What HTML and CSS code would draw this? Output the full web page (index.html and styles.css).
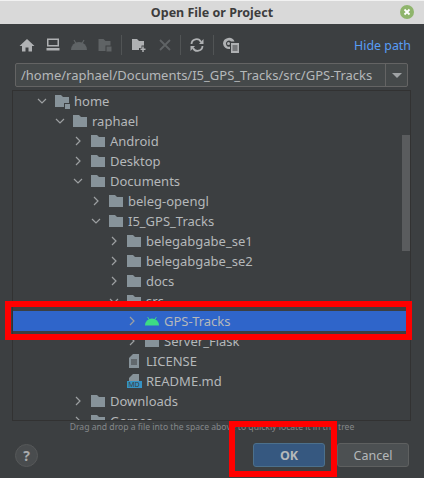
FILE: index.html
```html
<!DOCTYPE html>
<html lang="en">
<head>
<meta charset="utf-8">
<title>Open File or Project</title>
<link rel="stylesheet" href="styles.css">
</head>
<body>
<svg class="defs" width="0" height="0" aria-hidden="true">
  <symbol id="folder" viewBox="0 0 14 12"><path d="M0 0h6l2 2h6v10H0z"/></symbol>
  <symbol id="android" viewBox="0 0 16 10"><path d="M0 10a8 8 0 0 1 16 0z"/><path d="M3 .5l2 3M13 .5l-2 3" stroke-width="1.1" stroke="currentColor"/></symbol>
</svg>
<div class="dialog">
  <header class="titlebar">
    <span class="title">Open File or Project</span>
    <svg class="close" width="14" height="14" viewBox="0 0 14 14"><circle cx="7" cy="7" r="7" fill="#8fb56c"/><path d="M4.500 4.500l5 5M9.500 4.500l-5 5" stroke="#fff" stroke-width="1.800"/></svg>
  </header>
  <div class="toolbar">
    <div class="tools">
      <span class="tool"><svg width="16" height="16" viewBox="0 0 16 16"><path d="M8 2L.5 9H3v5.500h3.500V10.500h3v4H13V9h2.500z" fill="#afb1b3"/></svg></span>
      <span class="tool"><svg width="16" height="16" viewBox="0 0 16 16"><path d="M2 1.500h12v8H2zM3.500 3v5h9V3zM1.500 11h13v2.500h-13z" fill="#afb1b3" fill-rule="evenodd"/></svg></span>
      <span class="tool"><svg width="18" height="16" viewBox="0 0 18 16"><path d="M1 13a8 8 0 0 1 16 0z" fill="#5f6365"/><path d="M4 3l2 3.500M14 3l-2 3.500" stroke="#5f6365" stroke-width="1.200"/></svg></span>
      <span class="tool"><svg width="16" height="16" viewBox="0 0 16 16"><path d="M1.500 2h5l2 2h5v4.500H8.500V14h-7z" fill="#5f6365"/><rect x="9.500" y="9.500" width="5" height="5" fill="#5f6365"/></svg></span>
      <span class="sep sep-a"></span>
      <span class="tool"><svg width="16" height="16" viewBox="0 0 16 16"><path d="M1 2h5l2 2h5v4.500h-2.500V11H8v2H1z" fill="#afb1b3"/><path d="M12 9.500v5.500M9.500 12.250h5" stroke="#afb1b3" stroke-width="1.500"/></svg></span>
      <span class="tool"><svg width="14" height="14" viewBox="0 0 14 14"><path d="M2 2l10 10M12 2L2 12" stroke="#5f6365" stroke-width="1.800"/></svg></span>
      <span class="sep sep-b"></span>
      <span class="tool"><svg width="16" height="16" viewBox="0 0 16 16"><path d="M2.500 7a5 5 0 0 1 9.500-2M13.500 9a5 5 0 0 1-9.500 2" fill="none" stroke="#afb1b3" stroke-width="1.800"/><path d="M14.500 2v5H10zM1.500 14V9H6z" fill="#afb1b3"/></svg></span>
      <span class="sep sep-c"></span>
      <span class="tool"><svg width="18" height="18" viewBox="0 0 18 18"><path d="M1 7.500a6 6 0 0 1 11.500-2H9a3 3 0 1 0-1 5v2.500A6 6 0 0 1 1 7.500z" fill="#afb1b3"/><circle cx="6.500" cy="7.500" r="1.500" fill="#afb1b3"/><path d="M9 7h8v10H9z" fill="#afb1b3"/><path d="M10.500 10h5M10.500 12h5M10.500 14h5" stroke="#3c3f41"/></svg></span>
    </div>
    <a class="hide-path">Hide path</a>
  </div>
  <div class="path-field">
    <span class="path-text">/home/raphael/Documents/I5_GPS_Tracks/src/GPS-Tracks</span>
    <span class="path-arrow"><i></i></span>
  </div>
  <div class="tree">
    <div class="row d0"><svg class="chev" viewBox="0 0 10 10"><path d="M1 3l4 4 4-4"/></svg><span class="ico"><svg class="folder home-f" width="14" height="12"><use href="#folder"/></svg><i class="lock"></i></span><span>home</span></div>
    <div class="row d1"><svg class="chev" viewBox="0 0 10 10"><path d="M1 3l4 4 4-4"/></svg><span class="ico"><svg class="folder" width="14" height="12"><use href="#folder"/></svg></span><span>raphael</span></div>
    <div class="row d2"><svg class="chev" viewBox="0 0 10 10"><path d="M3 1l4 4-4 4"/></svg><span class="ico"><svg class="folder" width="14" height="12"><use href="#folder"/></svg></span><span>Android</span></div>
    <div class="row d2"><svg class="chev" viewBox="0 0 10 10"><path d="M3 1l4 4-4 4"/></svg><span class="ico"><svg class="folder" width="14" height="12"><use href="#folder"/></svg></span><span>Desktop</span></div>
    <div class="row d2"><svg class="chev" viewBox="0 0 10 10"><path d="M1 3l4 4 4-4"/></svg><span class="ico"><svg class="folder" width="14" height="12"><use href="#folder"/></svg></span><span>Documents</span></div>
    <div class="row d3"><svg class="chev" viewBox="0 0 10 10"><path d="M3 1l4 4-4 4"/></svg><span class="ico"><svg class="folder" width="14" height="12"><use href="#folder"/></svg></span><span>beleg-opengl</span></div>
    <div class="row d3"><svg class="chev" viewBox="0 0 10 10"><path d="M1 3l4 4 4-4"/></svg><span class="ico"><svg class="folder" width="14" height="12"><use href="#folder"/></svg></span><span>I5_GPS_Tracks</span></div>
    <div class="row d4"><svg class="chev" viewBox="0 0 10 10"><path d="M3 1l4 4-4 4"/></svg><span class="ico"><svg class="folder" width="14" height="12"><use href="#folder"/></svg></span><span>belegabgabe_se1</span></div>
    <div class="row d4"><svg class="chev" viewBox="0 0 10 10"><path d="M3 1l4 4-4 4"/></svg><span class="ico"><svg class="folder" width="14" height="12"><use href="#folder"/></svg></span><span>belegabgabe_se2</span></div>
    <div class="row d4"><svg class="chev" viewBox="0 0 10 10"><path d="M3 1l4 4-4 4"/></svg><span class="ico"><svg class="folder" width="14" height="12"><use href="#folder"/></svg></span><span>docs</span></div>
    <div class="row d4"><svg class="chev" viewBox="0 0 10 10"><path d="M1 3l4 4 4-4"/></svg><span class="ico"><svg class="folder" width="14" height="12"><use href="#folder"/></svg></span><span>src</span></div>
    <div class="row d5 selected"><svg class="chev" viewBox="0 0 10 10"><path d="M3 1l4 4-4 4"/></svg><span class="ico"><svg class="android" width="16" height="10"><use href="#android"/></svg></span><span>GPS-Tracks</span></div>
    <div class="row d5"><svg class="chev" viewBox="0 0 10 10"><path d="M3 1l4 4-4 4"/></svg><span class="ico"><svg class="folder" width="14" height="12"><use href="#folder"/></svg></span><span>Server_Flask</span></div>
    <div class="row d4"><span class="chev"></span><span class="ico"><svg width="10" height="14" viewBox="0 0 10 14"><path d="M4 0h6v14H0V4z" fill="#87939a"/><path d="M2 6h6M2 8h6M2 10h6" stroke="#3c3f41"/></svg></span><span>LICENSE</span></div>
    <div class="row d4"><span class="chev"></span><span class="ico ico-md"><svg width="10" height="7" viewBox="0 0 10 7"><path d="M4 0h6v7H0V4z" fill="#87939a"/></svg><b class="md">MD</b></span><span>README.md</span></div>
    <div class="row d2"><svg class="chev" viewBox="0 0 10 10"><path d="M3 1l4 4-4 4"/></svg><span class="ico"><svg class="folder" width="14" height="12"><use href="#folder"/></svg></span><span>Downloads</span></div>
    <div class="row d2"><svg class="chev" viewBox="0 0 10 10"><path d="M3 1l4 4-4 4"/></svg><span class="ico"><svg class="folder" width="14" height="12"><use href="#folder"/></svg></span><span>Games</span></div>
    <div class="scrollbar"></div>
  </div>
  <p class="hint">Drag and drop a file into the space above to quickly locate it in the tree</p>
  <footer class="footer">
    <span class="help">?</span>
    <div class="buttons">
      <button class="btn primary">OK</button>
      <button class="btn">Cancel</button>
    </div>
  </footer>
  <div class="mark mark-row"></div>
  <div class="mark mark-ok"></div>
</div>
</body>
</html>
```

FILE: styles.css
```css
* { box-sizing: border-box; }
html, body { margin: 0; padding: 0; }
body {
  width: 424px;
  height: 478px;
  overflow: hidden;
  background: #3c3f41;
  font-family: "Noto Sans", sans-serif;
  color: #b5b8ba;
}
.defs { position: absolute; }
.dialog { position: relative; width: 424px; height: 478px; overflow: hidden; }

.titlebar {
  height: 24px;
  background: #d9d9d9;
  border-top: 1px solid #f2f2f2;
  display: flex;
  align-items: center;
  justify-content: center;
  position: relative;
}
.title { font-size: 12.500px; font-weight: 700; color: #3d3d3d; }
.close { position: absolute; right: 10px; top: 4px; }

.toolbar {
  height: 39px;
  padding: 3px 13px 0 14px;
  display: flex;
  align-items: center;
  justify-content: space-between;
}
.tools { display: flex; align-items: center; }
.tool {
  width: 26px;
  height: 20px;
  flex: none;
  display: flex;
  align-items: center;
  justify-content: center;
}
.sep { width: 1px; height: 20px; background: #515455; flex: none; }
.sep-a { margin: 0 4px 0 3px; }
.sep-b { margin: 0 3px 0 2px; }
.sep-c { margin: 0 4px 0 3px; }
.hide-path { font-size: 12.400px; color: #589df6; }

.path-field {
  margin: 0 16px 0 15px;
  height: 24px;
  border: 1px solid #646464;
  border-radius: 2px;
  background: #45494a;
  display: flex;
  align-items: center;
  justify-content: space-between;
}
.path-text { padding-left: 5px; font-size: 13px; white-space: nowrap; }
.path-arrow {
  width: 22px;
  height: 22px;
  border-left: 1px solid #646464;
  display: flex;
  align-items: center;
  justify-content: center;
}
.path-arrow i {
  border-left: 5px solid transparent;
  border-right: 5px solid transparent;
  border-top: 5px solid #a0a3a5;
}

.tree {
  position: relative;
  margin: 3px 13px 0 12px;
  height: 331px;
  border: 1px solid #323232;
  overflow: hidden;
}
.row {
  height: 20px;
  display: flex;
  align-items: center;
  font-size: 13px;
  white-space: nowrap;
}
.d0 { padding-left: 24px; }
.d1 { padding-left: 42px; }
.d2 { padding-left: 60px; }
.d3 { padding-left: 78px; }
.d4 { padding-left: 96px; }
.d5 { padding-left: 114px; }
.selected { background: #2f65ca; }
.chev {
  width: 10px;
  height: 10px;
  flex: none;
  margin-right: 8px;
  fill: none;
  stroke: #9da0a2;
  stroke-width: 1.200;
}
.ico {
  position: relative;
  width: 14px;
  height: 14px;
  margin-right: 5px;
  flex: none;
  display: flex;
  align-items: center;
  justify-content: center;
}
.folder { fill: #87939a; }
.android { fill: #3ddc84; color: #3ddc84; }
.lock {
  position: absolute;
  right: -1px;
  bottom: -1px;
  width: 5px;
  height: 5px;
  background: #87939a;
  outline: 1px solid #3c3f41;
}
.ico-md { flex-direction: column; justify-content: flex-start; }
.md {
  width: 15px;
  height: 7px;
  flex: none;
  background: #3592c4;
  color: #3c3f41;
  font-size: 7px;
  line-height: 7px;
  font-weight: 400;
  text-align: center;
}
.scrollbar {
  position: absolute;
  right: 0;
  top: 44px;
  width: 8px;
  height: 116px;
  background: #5a5c5e;
}

.hint {
  margin: 0;
  height: 12px;
  font-size: 8.600px;
  line-height: 12px;
  text-align: center;
  color: #85888a;
  white-space: nowrap;
}
.footer {
  margin-top: 10px;
  padding: 0 15px;
  display: flex;
  align-items: center;
  justify-content: space-between;
}
.help {
  width: 23px;
  height: 23px;
  border-radius: 50%;
  background: #494c4e;
  border: 1px solid #565859;
  display: flex;
  align-items: center;
  justify-content: center;
  font-size: 14px;
  font-weight: 700;
  color: #a9abad;
}
.buttons { display: flex; gap: 12px; }
.btn {
  width: 72px;
  height: 24px;
  padding: 0;
  border: 1px solid #5e6060;
  border-radius: 3px;
  background: #4c5052;
  color: #b5b8ba;
  font-family: inherit;
  font-size: 12.500px;
}
.primary {
  background: #365880;
  border-color: #4c708c;
  font-weight: 700;
}

.mark { position: absolute; border: 6px solid #ff0000; }
.mark-row { left: 5px; top: 301px; width: 407px; height: 39px; }
.mark-ok { left: 229px; top: 421px; width: 108px; height: 56px; }
```
